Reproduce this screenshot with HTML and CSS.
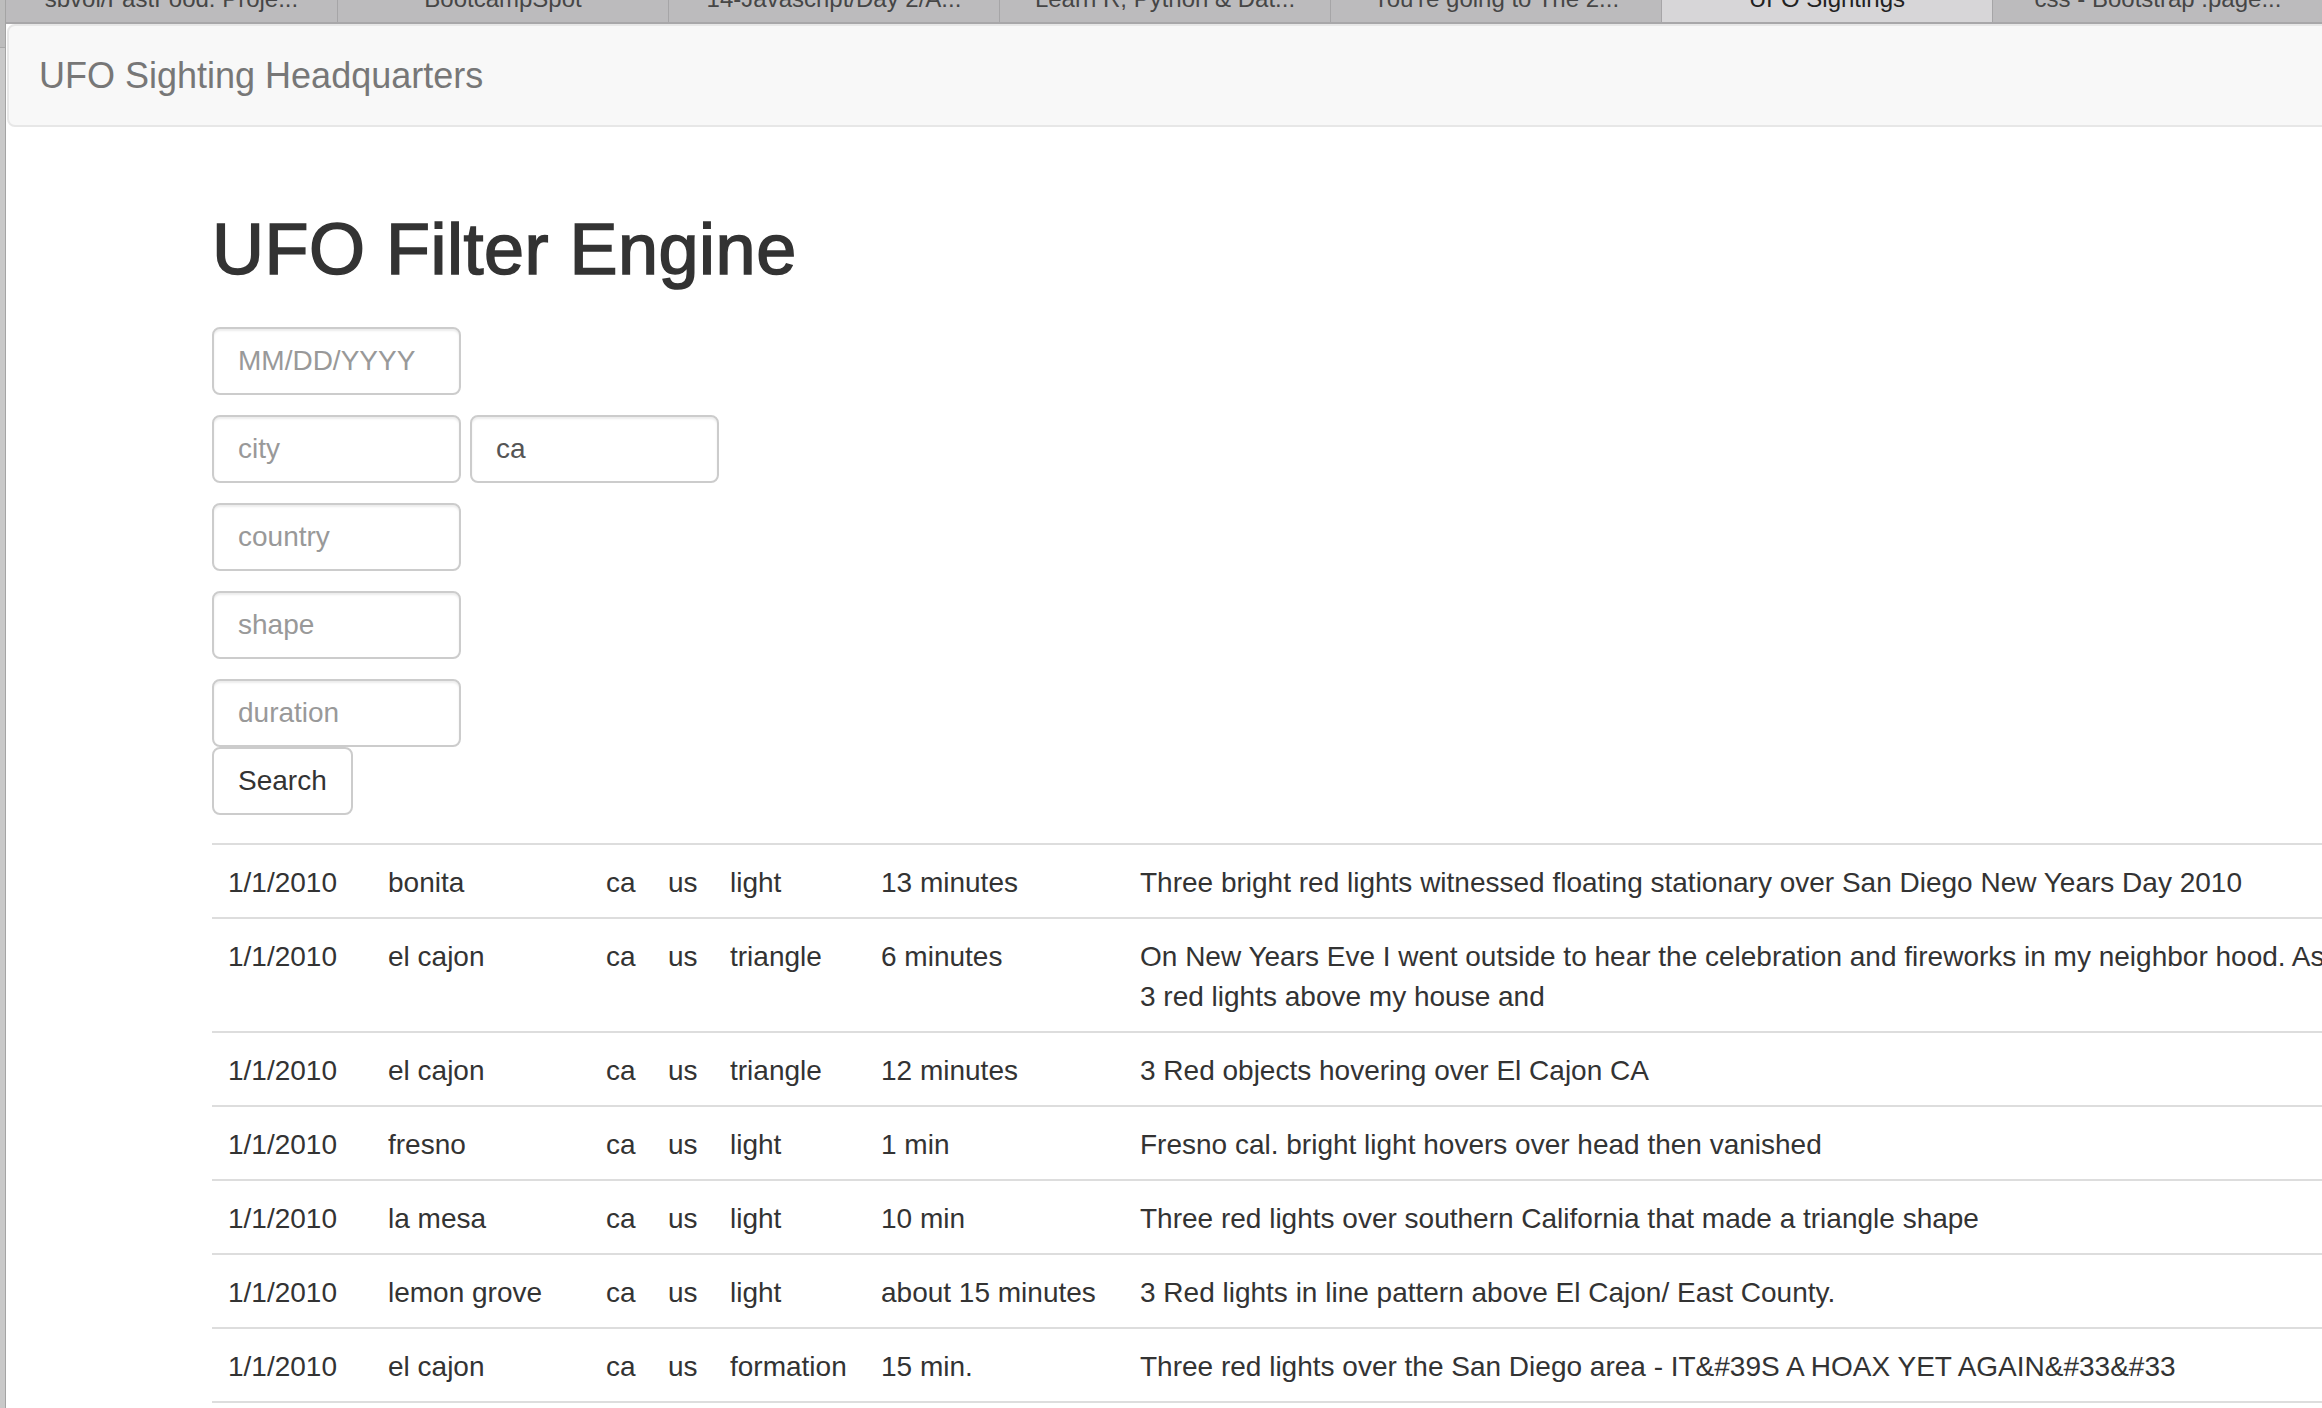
FILE: index.html
```html
<!DOCTYPE html>
<html lang="en">
<head>
<meta charset="utf-8">
<title>UFO Sightings</title>
<link rel="stylesheet" href="styles.css">
</head>
<body>
<div class="window">
  <div class="win-edge"></div>
  <div class="browser">
    <div class="tabbar">
      <div class="tab"><span class="tab-label">sbvol/FastFood: Proje...</span></div>
      <div class="tab"><span class="tab-label">BootcampSpot</span></div>
      <div class="tab"><span class="tab-label">14-Javascript/Day 2/A...</span></div>
      <div class="tab"><span class="tab-label">Learn R, Python &amp; Dat...</span></div>
      <div class="tab"><span class="tab-label">You're going to The 2...</span></div>
      <div class="tab active"><span class="tab-label">UFO Sightings</span></div>
      <div class="tab"><span class="tab-label">css - Bootstrap .page...</span></div>
    </div>
    <div class="page">
      <nav class="navbar">
        <a class="navbar-brand" href="#">UFO Sighting Headquarters</a>
      </nav>
      <div class="container">
        <h1 class="title">UFO Filter Engine</h1>
        <form class="filters">
          <div class="filter-row"><input class="form-control" type="text" placeholder="MM/DD/YYYY"></div>
          <div class="filter-row"><input class="form-control" type="text" placeholder="city"><input class="form-control" type="text" placeholder="state" value="ca"></div>
          <div class="filter-row"><input class="form-control" type="text" placeholder="country"></div>
          <div class="filter-row"><input class="form-control" type="text" placeholder="shape"></div>
          <div class="filter-row"><input class="form-control" type="text" placeholder="duration"></div>
          <div class="filter-row tight"><button class="btn" type="button">Search</button></div>
        </form>
        <table class="table">
          <colgroup>
            <col class="c-date"><col class="c-city"><col class="c-state"><col class="c-country"><col class="c-shape"><col class="c-duration"><col class="c-comment">
          </colgroup>
          <tbody>
            <tr><td>1/1/2010</td><td>bonita</td><td>ca</td><td>us</td><td>light</td><td>13 minutes</td><td class="comment">Three bright red lights witnessed floating stationary over San Diego New Years Day 2010</td></tr>
            <tr><td>1/1/2010</td><td>el cajon</td><td>ca</td><td>us</td><td>triangle</td><td>6 minutes</td><td class="comment">On New Years Eve I went outside to hear the celebration and fireworks in my neighbor hood. As I looked up I saw<br>3 red lights above my house and</td></tr>
            <tr><td>1/1/2010</td><td>el cajon</td><td>ca</td><td>us</td><td>triangle</td><td>12 minutes</td><td class="comment">3 Red objects hovering over El Cajon CA</td></tr>
            <tr><td>1/1/2010</td><td>fresno</td><td>ca</td><td>us</td><td>light</td><td>1 min</td><td class="comment">Fresno cal. bright light hovers over head then vanished</td></tr>
            <tr><td>1/1/2010</td><td>la mesa</td><td>ca</td><td>us</td><td>light</td><td>10 min</td><td class="comment">Three red lights over southern California that made a triangle shape</td></tr>
            <tr><td>1/1/2010</td><td>lemon grove</td><td>ca</td><td>us</td><td>light</td><td>about 15 minutes</td><td class="comment">3 Red lights in line pattern above El Cajon/ East County.</td></tr>
            <tr><td>1/1/2010</td><td>el cajon</td><td>ca</td><td>us</td><td>formation</td><td>15 min.</td><td class="comment">Three red lights over the San Diego area - IT&amp;#39S A HOAX YET AGAIN&amp;#33&amp;#33</td></tr>
          </tbody>
        </table>
      </div>
    </div>
  </div>
</div>
</body>
</html>
```

FILE: styles.css
```css
* { box-sizing: border-box; }

html, body {
  margin: 0;
  padding: 0;
  height: 100%;
  overflow: hidden;
  background: #fff;
}

body {
  font-family: "Liberation Sans", Arial, Helvetica, sans-serif;
  font-size: 28px;
  line-height: 40px;
  color: #333;
}

.window {
  display: flex;
  height: 1408px;
}

.win-edge {
  width: 6px;
  flex: 0 0 6px;
  background: linear-gradient(#bdbdbd 0, #bdbdbd 47px, #a9a9a9 47px, #a9a9a9 48px, #c9c9c9 48px);
  border-right: 1px solid #a4a4a4;
}

.browser {
  flex: 1;
  min-width: 0;
  display: flex;
  flex-direction: column;
  overflow: hidden;
}

/* ---------- tab bar ---------- */
.tabbar {
  display: flex;
  height: 24px;
  flex: 0 0 24px;
  background: #bcbbbd;
  border-bottom: 2px solid #a8a7a9;
}

.tab {
  flex: 0 0 331px;
  overflow: hidden;
  text-align: center;
  border-left: 1px solid #a6a5a7;
  font-size: 24px;
  color: #464646;
}

.tab:first-child { border-left: none; }

.tab.active {
  background: #d7d6d8;
  color: #222;
}

.tab-label {
  display: block;
  line-height: 24px;
  margin-top: -13px;
  white-space: nowrap;
}

/* ---------- page ---------- */
.page {
  flex: 1;
  overflow: hidden;
}

.navbar {
  display: flex;
  height: 103px;
  margin: 0 -20px 0 1px;
  background: #f8f8f8;
  border: 2px solid #e7e7e7;
  border-radius: 8px;
}

.navbar-brand {
  display: block;
  padding: 30px 30px 0 30px;
  font-size: 36px;
  line-height: 40px;
  color: #777;
  text-decoration: none;
}

.container {
  padding-left: 206px;
}

.title {
  margin: 83px 0 38px;
  font-size: 72px;
  line-height: 79px;
  font-weight: 400;
  letter-spacing: 0.5px;
  color: #333;
  -webkit-text-stroke: 1.6px #333;
}

/* ---------- filters ---------- */
.filters {
  display: flex;
  flex-direction: column;
  gap: 20px;
}

.filter-row {
  display: flex;
  gap: 9px;
}

.filter-row.tight {
  margin-top: -20px;
}

.form-control {
  width: 249px;
  height: 68px;
  padding: 12px 24px;
  font-family: inherit;
  font-size: 28px;
  line-height: 40px;
  color: #555;
  background: #fff;
  border: 2px solid #ccc;
  border-radius: 8px;
  box-shadow: inset 0 2px 2px rgba(0, 0, 0, 0.075);
  outline: none;
}

.form-control::placeholder {
  color: #999;
  opacity: 1;
}

.btn {
  height: 68px;
  padding: 12px 24px;
  font-family: inherit;
  font-size: 28px;
  line-height: 40px;
  color: #333;
  background: #fff;
  border: 2px solid #ccc;
  border-radius: 8px;
  cursor: pointer;
}

/* ---------- table ---------- */
.table {
  margin-top: 28px;
  width: 2280px;
  table-layout: fixed;
  border-collapse: collapse;
  border-spacing: 0;
}

.c-date { width: 160px; }
.c-city { width: 218px; }
.c-state { width: 62px; }
.c-country { width: 62px; }
.c-shape { width: 151px; }
.c-duration { width: 259px; }

.table td {
  padding: 18px 16px 14px;
  line-height: 40px;
  vertical-align: top;
  border-top: 2px solid #ddd;
  white-space: nowrap;
  overflow: hidden;
}

.table tr:last-child td {
  border-bottom: 2px solid #ddd;
}
```
